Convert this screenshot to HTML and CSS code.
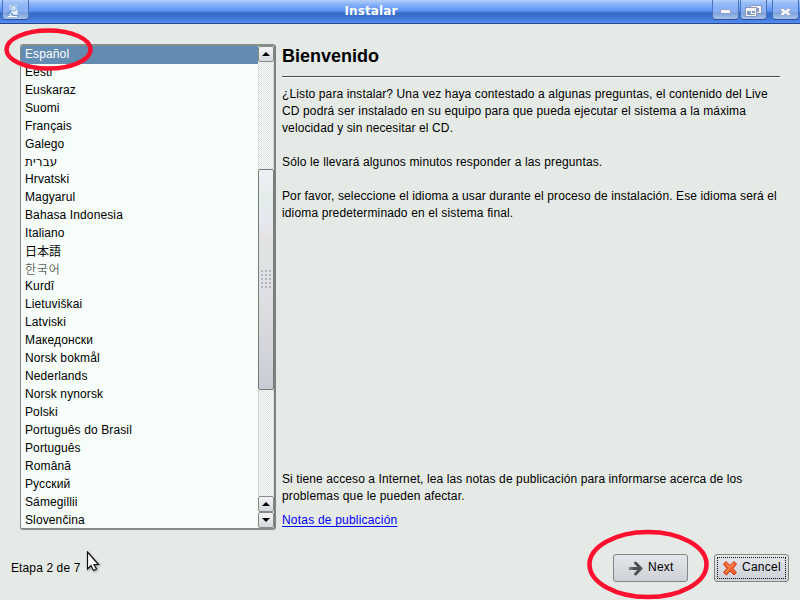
FILE: index.html
```html
<!DOCTYPE html>
<html lang="es">
<head>
<meta charset="utf-8">
<title>Instalar</title>
<link rel="stylesheet" href="styles.css">
</head>
<body>
<header class="titlebar">
  <div class="tb-button app-icon">
    <svg width="27" height="20" viewBox="0 0 27 20"><path d="M7.500 5l7-.5 1.500 11-8 1z" fill="#dceafa"/><circle cx="11.500" cy="8" r="3" fill="#cfe2f5" stroke="#84acd8"/><path d="M5 15l3.500-4 2 4 6.500 1" fill="none" stroke="#6796d4" stroke-width="1.500"/><path d="M9 11.500l4 3 2-4M6 16.500h9" fill="none" stroke="#f5faff"/></svg>
  </div>
  <h1 class="title">Instalar</h1>
  <div class="controls">
    <div class="tb-button"><svg width="27" height="20" viewBox="0 0 27 20"><rect x="8.500" y="9.500" width="10" height="4" fill="#f6f6f6" stroke="#8ba3cd"/></svg></div>
    <div class="tb-button"><svg width="27" height="20" viewBox="0 0 27 20" shape-rendering="crispEdges"><rect x="10.500" y="5.500" width="11" height="8" fill="#f6f6f6" stroke="#8998b8"/><rect x="13.500" y="8.500" width="5" height="3" fill="#7698d4" stroke="#8998b8"/><rect x="5.500" y="7.500" width="11" height="9" fill="#f6f6f6" stroke="#8998b8"/><rect x="7.500" y="11.500" width="7" height="3" fill="#83a3d8" stroke="#8998b8"/><path d="M11.500 11v2.500H15" fill="none" stroke="#fff"/></svg></div>
    <div class="tb-button close"><svg width="27" height="20" viewBox="0 0 27 20"><path d="M8.500 8.500h3l2 2 2-2h3v1.500l-2 2 2 2v1.500h-3l-2-2-2 2h-3V14l2-2-2-2z" fill="#f6f6f6" stroke="#8ba3cd" stroke-width=".8"/></svg></div>
  </div>
</header>
<main class="content">
  <div class="listbox">
    <ul class="languages">
      <li class="selected">Español</li><li>Eesti</li><li>Euskaraz</li><li>Suomi</li><li>Français</li><li>Galego</li><li class="short hebrew">עברית</li><li>Hrvatski</li><li>Magyarul</li><li>Bahasa Indonesia</li><li>Italiano</li><li class="cjk">日本語</li><li class="short korean">한국어</li><li>Kurdî</li><li>Lietuviškai</li><li>Latviski</li><li>Македонски</li><li>Norsk bokmål</li><li>Nederlands</li><li>Norsk nynorsk</li><li>Polski</li><li>Português do Brasil</li><li>Português</li><li>Română</li><li>Русский</li><li>Sámegillii</li><li>Slovenčina</li>
    </ul>
    <div class="scrollbar">
      <div class="step"><svg width="8" height="4"><path d="M0 4L4 0l4 4z"/></svg></div>
      <div class="track before"></div>
      <div class="thumb"><div class="grip"></div></div>
      <div class="track after"></div>
      <div class="step"><svg width="8" height="4"><path d="M0 4L4 0l4 4z"/></svg></div>
      <div class="step"><svg width="8" height="4"><path d="M0 0h8L4 4z"/></svg></div>
    </div>
  </div>
  <section class="welcome">
    <h2>Bienvenido</h2>
    <hr>
    <p>¿Listo para instalar? Una vez haya contestado a algunas preguntas, el contenido del Live<br><span class="mid">CD podrá ser instalado en su equipo para que pueda ejecutar el sistema a la máxima</span><br>velocidad y sin necesitar el CD.</p>
    <p class="wide">Sólo le llevará algunos minutos responder a las preguntas.</p>
    <p>Por favor, seleccione el idioma a usar durante el proceso de instalación. Ese idioma será el<br><span class="wide">idioma predeterminado en el sistema final.</span></p>
    <div class="release">
      <p><span class="narrow">Si tiene acceso a Internet, lea las notas de publicación para informarse acerca de los</span><br><span class="wide">problemas que le pueden afectar.</span></p>
      <a class="notes">Notas de publicación</a>
    </div>
  </section>
</main>
<footer class="footer">
  <span class="step-label">Etapa 2 de 7</span>
  <div class="button next"><svg width="16" height="16" viewBox="0 0 16 16"><defs><linearGradient id="ag"><stop offset="0" stop-color="#8b8e8c"/><stop offset=".6" stop-color="#444846"/><stop offset="1" stop-color="#555"/></linearGradient></defs><path d="M2 8.500h11M7.500 3L13 8.500 7.500 14" fill="none" stroke="url(#ag)" stroke-width="3" stroke-linecap="round" stroke-linejoin="round"/><path d="M1 7h9v3H1z" fill="url(#ag)"/></svg><span>Next</span></div>
  <div class="button cancel"><svg width="16" height="16" viewBox="0 0 16 16"><path d="M4 1.500l4 4 4-4 2.500 2.500-3.500 4.500 3.500 4-2.500 2.500L8 11 4.500 15 1.500 12.500l3.500-4-3.500-4.500z" fill="#f4642e" stroke="#d23a18" stroke-linejoin="round"/><path d="M4 3.500l4 4 4-4M4 12l3-3" fill="none" stroke="#ffa36d"/></svg><span>Cancel</span></div>
</footer>
<svg class="marks" width="800" height="600" viewBox="0 0 800 600">
  <ellipse cx="48.500" cy="49.500" rx="42" ry="19" />
  <ellipse cx="648" cy="564.500" rx="58.500" ry="32.500" />
</svg>
<svg class="cursor" width="16" height="22" viewBox="0 0 16 22"><path d="M1.500 1v17l3.500-3.500 2.500 5 3-1.500-2.500-4.500h4.500z" fill="#fff" stroke="#111" stroke-width="1.200"/></svg>
</body>
</html>
```

FILE: styles.css
```css
* { box-sizing: border-box; }
body { margin: 0; width: 800px; height: 600px; overflow: hidden; display: flex; flex-direction: column; background: #e6eae6; color: #000; font: 12px/17px "Liberation Sans", Arial, sans-serif; letter-spacing: .115px; }
svg { display: block; flex: none; }
.titlebar { height: 24px; flex: none; display: grid; grid-template-columns: 90px 1fr 90px; border-bottom: 1px solid #29468a; background: linear-gradient(#b4d0fa 0, #8bb4f8 4px, #5b90f2 11px, #4d82e4 12px, #356bc1 13px, #3e75d2 18px, #548df5 23px); }
.title { text-align: center; color: #fff; font: bold 12px/22px "DejaVu Sans", sans-serif; padding-right: 58px; margin: 0 -29px; letter-spacing: .1px; }
.tb-button { width: 27px; height: 20px; border: 1px solid #315ba6; border-top: 0; border-color: #4873bd #4873bd #2b5298; border-radius: 0 0 4px 4px; background: linear-gradient(rgba(255,255,255,0) 10%, rgba(255,255,255,.25) 50%, rgba(255,255,255,.55)); display: flex; justify-content: center; }
.app-icon { margin-left: 2px; }
.controls { display: flex; gap: 1px; margin-left: 2px; }
.close { margin-left: 4px; }
.content { height: 506px; flex: none; display: flex; padding: 20px 20px 0; gap: 6px; }
.listbox { width: 256px; height: 486px; flex: none; display: flex; border: 2px solid #898d89; border-left-width: 1px; border-right-color: #7d817e; border-radius: 3px; background: #f7fdf9; overflow: hidden; }
.languages { list-style: none; margin: 0; padding: 0; flex: 1; overflow: hidden; }
.languages li { height: 18px; line-height: 17px; padding-left: 4px; white-space: nowrap; }
.languages .short { height: 17px; }
.languages .selected { background: #628cb2; color: #fff; }
.languages .cjk { font-family: "Noto Sans CJK JP", sans-serif; line-height: 15px; letter-spacing: 0; }
.languages .korean { color: #222; font-family: "Noto Sans CJK KR", sans-serif; font-weight: 300; line-height: 15px; letter-spacing: .8px; }
.hebrew { font-family: "DejaVu Sans", sans-serif; }
.scrollbar { width: 16px; display: flex; flex-direction: column; }
.step { height: 16px; border: 1px solid #868986; border-radius: 2px; background: linear-gradient(#f3f4f6, #d5d8dc); display: flex; align-items: center; justify-content: center; }
.track { border: 1px dotted #c4cac6; border-width: 0 1px; background: repeating-conic-gradient(#e0e5e1 0 25%, #f5faf7 0 50%) 0 0 / 2px 2px; }
.before { height: 107px; }
.thumb { height: 221px; border: 1px solid #777b79; border-radius: 2px; background: linear-gradient(#eff0f6, #e4edea 12%, #e6e8f0 24%, #e5e2e4 31%, #dde4e1 37%, #e0e2e8 50%, #dcdddf 65%, #c9ccd5); display: flex; align-items: center; justify-content: center; }
.grip { width: 11px; height: 19px; background: radial-gradient(circle at 1px 1px, #b3b5b7 1px, transparent 1.200px) 0 0 / 4px 4px; }
.after { flex: 1; }
.welcome { flex: 1; white-space: nowrap; display: flex; flex-direction: column; }
h2 { margin: 0; font-size: 18px; line-height: 24px; letter-spacing: 0; }
hr { width: 498px; height: 2px; margin: 8px 0; border: 0; border-top: 1px solid #4a4f4c; border-bottom: 1px solid #f8fbf9; }
.welcome p { margin: 0 0 17px; }
.mid { letter-spacing: .127px; }
.wide { letter-spacing: .14px; }
.narrow { letter-spacing: .103px; }
.release { margin-top: auto; height: 59px; }
.welcome .release p { margin-bottom: 7px; }
.notes { color: #00f; text-decoration: underline; text-underline-offset: 2px; letter-spacing: .2px; }
.footer { flex: 1; display: flex; padding: 24px 11px 0; }
.step-label { margin-right: auto; padding-top: 6px; }
.button { width: 75px; height: 28px; display: flex; align-items: center; gap: 4px; border: 1px solid #838784; border-radius: 3px; background: linear-gradient(#e4e6ea, #cdd0d6); padding-left: 14px; position: relative; }
.button span { padding-bottom: 2px; letter-spacing: .25px; }
.cancel { margin-left: 26px; padding-left: 7px; }
.cancel::after { content: ""; position: absolute; inset: 2px; border: 1px dotted #111; }
.marks { position: absolute; left: 0; top: 0; fill: none; stroke: #ff102f; stroke-width: 4.500; }
.cursor { position: absolute; left: 86px; top: 551px; filter: drop-shadow(1px 1px 1px rgba(0,0,0,.35)); }
```
